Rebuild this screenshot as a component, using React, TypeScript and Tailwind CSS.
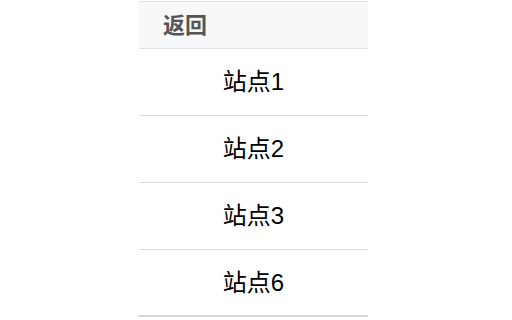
export default function App() {
  const items = ["站点1", "站点2", "站点3", "站点6"];
  return (
    <div
      className="w-[512px] h-[320px] bg-white overflow-hidden"
      style={{ fontFamily: '"Liberation Sans", "Noto Sans CJK SC", sans-serif' }}
    >
      <div className="ml-[139px] w-[229px] pt-px">
        <div className="h-[48px] bg-[#f7f8fa] border-t border-b border-[#e2e2e2] flex items-center pl-[24px] text-[22px] font-bold text-[#555555]">
          返回
        </div>
        {items.map((t, i) => (
          <div
            key={t}
            className={`h-[67px] flex items-center justify-center text-[24px] text-black border-b ${
              i === items.length - 1 ? "border-b-2 border-[#d4d4d4]" : "border-[#dddddd]"
            }`}
          >
            {t}
          </div>
        ))}
      </div>
    </div>
  );
}
